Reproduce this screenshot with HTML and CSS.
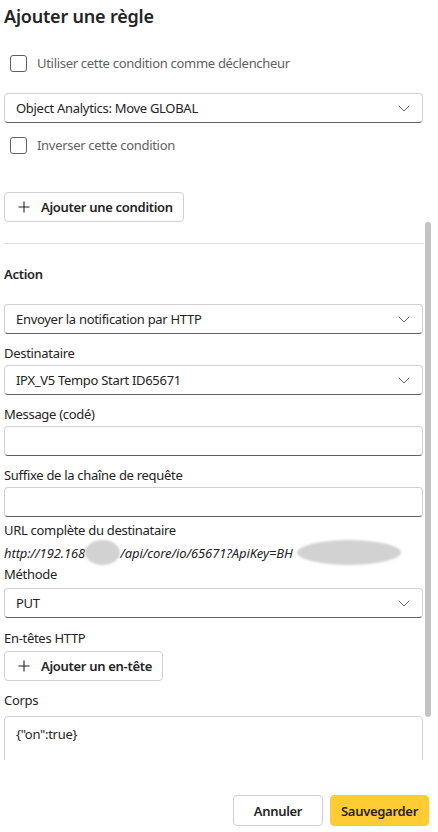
FILE: index.html
```html
<!DOCTYPE html>
<html lang="fr">
<head>
<meta charset="utf-8">
<title>Ajouter une règle</title>
<link rel="stylesheet" href="styles.css">
</head>
<body>
<div class="dialog">
  <h1 class="title">Ajouter une règle</h1>
  <div class="scroll">
    <div class="content">
      <label class="check mt-21"><span class="box"></span><span>Utiliser cette condition comme déclencheur</span></label>
      <div class="select mt-20"><span>Object Analytics: Move GLOBAL</span><svg class="chev" viewBox="0 0 12 7" width="12" height="7"><path d="M0.8 0.8 L6 6 L11.2 0.8" fill="none" stroke="#616161" stroke-width="1"/></svg></div>
      <label class="check mt-12"><span class="box"></span><span>Inverser cette condition</span></label>
      <button class="btn mt-37"><svg class="plus" viewBox="0 0 12 12" width="12" height="12"><path d="M6 0.5 V11.5 M0.5 6 H11.5" stroke="#242424" stroke-width="1.1" fill="none"/></svg><span>Ajouter une condition</span></button>
      <div class="divider"></div>
      <div class="section">Action</div>
      <div class="select mt-20"><span>Envoyer la notification par HTTP</span><svg class="chev" viewBox="0 0 12 7" width="12" height="7"><path d="M0.8 0.8 L6 6 L11.2 0.8" fill="none" stroke="#616161" stroke-width="1"/></svg></div>
      <div class="label mt-9">Destinataire</div>
      <div class="select mt-2"><span>IPX_V5 Tempo Start ID65671</span><svg class="chev" viewBox="0 0 12 7" width="12" height="7"><path d="M0.8 0.8 L6 6 L11.2 0.8" fill="none" stroke="#616161" stroke-width="1"/></svg></div>
      <div class="label mt-9">Message (codé)</div>
      <div class="input mt-2"></div>
      <div class="label mt-9">Suffixe de la chaîne de requête</div>
      <div class="input mt-2"></div>
      <div class="label mt-3">URL complète du destinataire</div>
      <div class="url">http://192.168<span class="blur b1"></span>/api/core/io/65671?ApiKey=BH<span class="blur b2"></span></div>
      <div class="label mt-4">Méthode</div>
      <div class="select mt-4"><span>PUT</span><svg class="chev" viewBox="0 0 12 7" width="12" height="7"><path d="M0.8 0.8 L6 6 L11.2 0.8" fill="none" stroke="#616161" stroke-width="1"/></svg></div>
      <div class="label mt-10">En-têtes HTTP</div>
      <button class="btn mt-3"><svg class="plus" viewBox="0 0 12 12" width="12" height="12"><path d="M6 0.5 V11.5 M0.5 6 H11.5" stroke="#242424" stroke-width="1.1" fill="none"/></svg><span>Ajouter un en-tête</span></button>
      <div class="label mt-9">Corps</div>
      <div class="textarea mt-6">{"on":true}</div>
    </div>
    <div class="thumb"></div>
  </div>
  <div class="footer">
    <button class="fbtn cancel">Annuler</button>
    <button class="fbtn save">Sauvegarder</button>
  </div>
</div>
</body>
</html>
```

FILE: styles.css
```css
* { box-sizing: border-box; }
html, body { margin: 0; padding: 0; background: #ffffff; }
body {
  font-family: "Noto Sans", "Open Sans", sans-serif;
  font-size: 13px;
  letter-spacing: -0.3px;
  color: #242424;
}
.dialog {
  width: 438px;
  height: 832px;
  display: flex;
  flex-direction: column;
}
.title {
  margin: 2px 0 0 4px;
  height: 30px;
  font-size: 18px;
  line-height: 28px;
  font-weight: 600;
  letter-spacing: -0.2px;
  color: #242424;
}
.scroll {
  position: relative;
  height: 728px;
  overflow: hidden;
  flex: none;
}
.content {
  display: flex;
  flex-direction: column;
  width: 420px;
  margin-left: 4px;
}
.mt-2 { margin-top: 2px; }
.mt-3 { margin-top: 3px; }
.mt-4 { margin-top: 4px; }
.mt-6 { margin-top: 6px; }
.mt-9 { margin-top: 9px; }
.mt-10 { margin-top: 10px; }
.mt-12 { margin-top: 12px; }
.mt-20 { margin-top: 20px; }
.mt-21 { margin-top: 21px; }
.mt-37 { margin-top: 37px; }

.check {
  display: flex;
  align-items: center;
  height: 20px;
  color: #616161;
}
.box {
  width: 17px;
  height: 17px;
  margin-left: 6px;
  margin-right: 10px;
  border: 1px solid #616161;
  border-radius: 3px;
  flex: none;
}
.select, .input {
  height: 30px;
  border: 1px solid #d1d1d1;
  border-bottom-color: #616161;
  border-radius: 4px;
  display: flex;
  align-items: center;
  justify-content: space-between;
  padding: 0 12px 0 11px;
  width: 419px;
}
.chev { flex: none; }
.btn {
  align-self: flex-start;
  height: 30px;
  display: flex;
  align-items: center;
  gap: 11px;
  padding: 0 10px 0 13px;
  border: 1px solid #d1d1d1;
  border-radius: 4px;
  background: #ffffff;
  font-family: inherit;
  font-size: 13px;
  font-weight: 600;
  letter-spacing: -0.3px;
  color: #242424;
}
.plus { flex: none; }
.divider {
  margin-top: 21px;
  height: 1px;
  background: #e0e0e0;
}
.section {
  margin-top: 20px;
  height: 20px;
  line-height: 20px;
  font-weight: 600;
}
.label {
  height: 20px;
  line-height: 20px;
}
.url {
  height: 20px;
  line-height: 20px;
  font-style: italic;
  letter-spacing: -0.1px;
  white-space: nowrap;
}
.blur {
  display: inline-block;
  height: 25px;
  vertical-align: -7px;
  background: #d2d2d2;
  border-radius: 50%;
  filter: blur(1.2px);
}
.b1 { width: 35px; }
.b2 { width: 104px; margin-left: 4px; }
.textarea {
  height: 80px;
  width: 419px;
  border: 1px solid #d1d1d1;
  border-radius: 4px;
  padding: 7px 11px;
  line-height: 20px;
}
.thumb {
  position: absolute;
  right: 7px;
  top: 190px;
  width: 6px;
  height: 495px;
  background: #c4c4c4;
  border-radius: 3px;
}
.footer {
  display: flex;
  justify-content: flex-end;
  gap: 7px;
  padding: 35px 9px 0 0;
}
.fbtn {
  height: 31px;
  border-radius: 4px;
  font-family: inherit;
  font-size: 13px;
  font-weight: 600;
  letter-spacing: -0.3px;
  color: #242424;
  padding: 0 8px;
}
.cancel {
  width: 90px;
  background: #ffffff;
  border: 1px solid #d1d1d1;
}
.save {
  width: 99px;
  background: #ffcc33;
  border: 1px solid #ffcc33;
}
```
